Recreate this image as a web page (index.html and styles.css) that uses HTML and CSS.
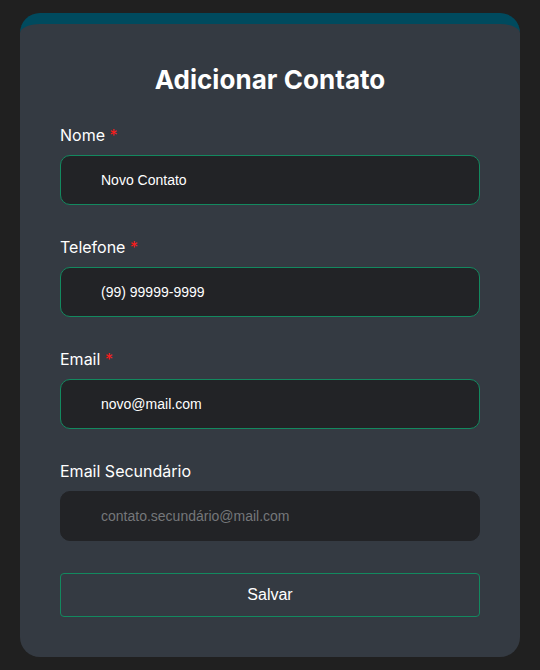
FILE: index.html
```html
<!DOCTYPE html>
<html lang="pt-BR">
<head>
<meta charset="utf-8">
<title>Adicionar Contato</title>
<link rel="stylesheet" href="styles.css">
</head>
<body>
<main class="page">
  <form class="card">
    <h1 class="title">Adicionar Contato</h1>
    <div class="field">
      <label class="label" for="nome">Nome <span class="req">*</span></label>
      <input class="input" id="nome" type="text" value="Novo Contato">
    </div>
    <div class="field">
      <label class="label" for="tel">Telefone <span class="req">*</span></label>
      <input class="input" id="tel" type="text" value="(99) 99999-9999">
    </div>
    <div class="field">
      <label class="label" for="email">Email <span class="req">*</span></label>
      <input class="input" id="email" type="text" value="novo@mail.com">
    </div>
    <div class="field">
      <label class="label" for="email2">Email Secundário</label>
      <input class="input input-empty" id="email2" type="text" placeholder="contato.secundário@mail.com">
    </div>
    <button class="btn" type="button">Salvar</button>
  </form>
</main>
</body>
</html>
```
FILE: styles.css
```css
html, body {
  margin: 0;
  padding: 0;
  background: #202020;
}
.page {
  padding: 13px 20px;
  font-family: "Inter", "Liberation Sans", sans-serif;
}
.card {
  background: #343a42;
  border-top: 11px solid #004a5e;
  border-radius: 20px;
  padding: 40px 40px 40px;
  display: flex;
  flex-direction: column;
}
.title {
  margin: 0 0 28px;
  text-align: center;
  color: #ffffff;
  font-size: 26px;
  line-height: 32px;
  font-weight: 700;
  letter-spacing: 0.05px;
}
.field {
  display: flex;
  flex-direction: column;
  margin-bottom: 31px;
}
.label {
  color: #ffffff;
  font-size: 16px;
  line-height: 22px;
  margin-bottom: 9px;
}
.req {
  color: #ff1a1a;
}
.input {
  box-sizing: border-box;
  height: 50px;
  width: 100%;
  background: #222326;
  border: 1px solid #13895f;
  border-radius: 10px;
  padding: 0 40px;
  color: #ffffff;
  font-family: "Liberation Sans", Arial, sans-serif;
  font-size: 14px;
  outline: none;
}
.input-empty {
  border-color: #222326;
}
.input::placeholder {
  color: #75777a;
}
.btn {
  margin-top: 1px;
  height: 44px;
  width: 100%;
  background: transparent;
  border: 1px solid #13895f;
  border-radius: 4px;
  color: #ffffff;
  font-family: "Liberation Sans", Arial, sans-serif;
  font-size: 16px;
  cursor: pointer;
}
```
